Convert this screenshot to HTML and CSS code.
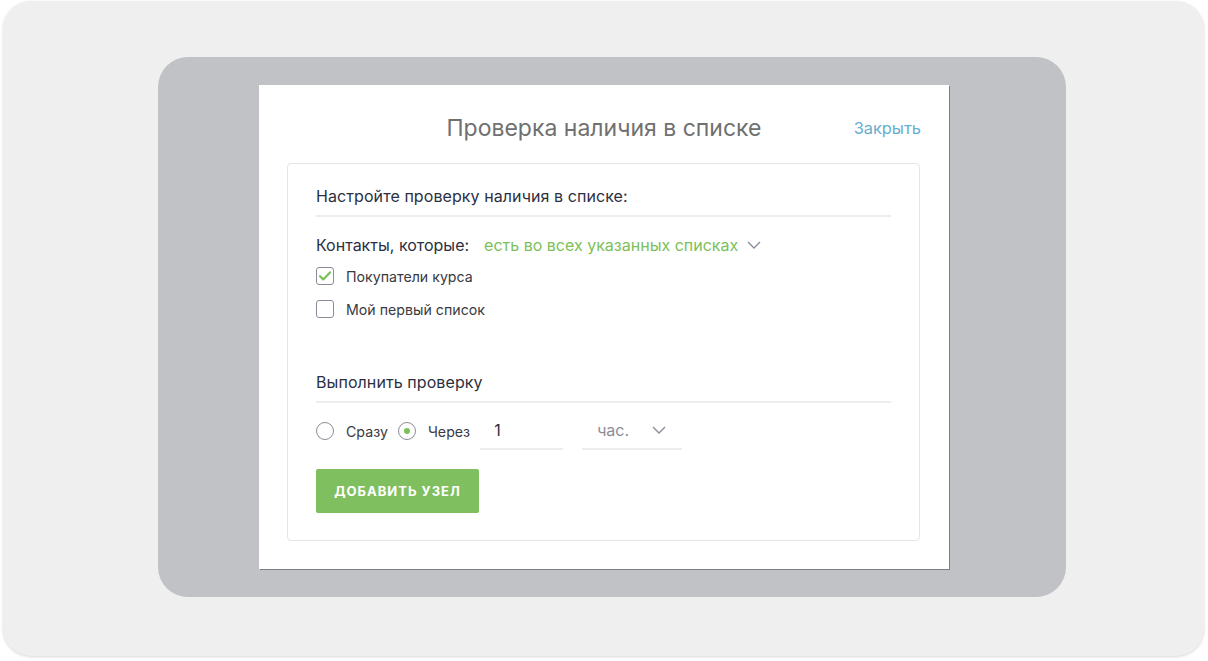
FILE: index.html
```html
<!DOCTYPE html>
<html lang="ru">
<head>
<meta charset="utf-8">
<link rel="stylesheet" href="styles.css">
</head>
<body>
<div class="frame">
  <div class="panel">
    <div class="modal">
      <div class="modal-head">
        <h1 class="modal-title">Проверка наличия в списке</h1>
        <a class="close" href="#">Закрыть</a>
      </div>
      <div class="card">
        <div class="section-title">Настройте проверку наличия в списке:</div>
        <div class="contacts-row">
          <span class="label">Контакты, которые:</span>
          <span class="dropdown">есть во всех указанных списках
            <svg class="chev" width="14" height="8" viewBox="0 0 14 8"><path d="M1 1l6 6 6-6" fill="none" stroke="#8a8d97" stroke-width="1.4"/></svg>
          </span>
        </div>
        <div class="check-row">
          <span class="checkbox checked">
            <svg width="14" height="12" viewBox="0 0 14 12"><path d="M2 6.2l3.2 3.2L12 2.4" fill="none" stroke="#7cc05a" stroke-width="2.2" stroke-linecap="round" stroke-linejoin="round"/></svg>
          </span>
          <span class="check-label">Покупатели курса</span>
        </div>
        <div class="check-row">
          <span class="checkbox"></span>
          <span class="check-label">Мой первый список</span>
        </div>
        <div class="section-title section-title--second">Выполнить проверку</div>
        <div class="radio-row">
          <span class="radio"></span>
          <span class="radio-label">Сразу</span>
          <span class="radio active"></span>
          <span class="radio-label">Через</span>
          <span class="num-input">1</span>
          <span class="unit-select">час.
            <svg class="chev" width="14" height="8" viewBox="0 0 14 8"><path d="M1 1l6 6 6-6" fill="none" stroke="#8a8d97" stroke-width="1.4"/></svg>
          </span>
        </div>
        <button class="add-btn">Добавить узел</button>
      </div>
    </div>
  </div>
</div>
</body>
</html>
```

FILE: styles.css
```css
* { box-sizing: border-box; }
html, body { margin: 0; padding: 0; background: #ffffff; }
body {
  font-family: Inter, "Noto Sans", "Liberation Sans", sans-serif;
  width: 1208px;
  height: 661px;
  overflow: hidden;
}
.frame {
  margin: 1px 0 0 3px;
  width: 1201px;
  height: 655px;
  background: #efefef;
  border-radius: 28px;
  box-shadow: 0 1px 3px rgba(0,0,0,0.16);
  padding: 56px 0 0 155px;
}
.panel {
  width: 908px;
  height: 540px;
  background: #c1c2c6;
  border-radius: 30px;
  padding: 28px 0 0 101px;
}
.modal {
  width: 690px;
  height: 484px;
  background: #ffffff;
  box-shadow: 1px 1px 0 #7c7d85;
  padding: 0 28px;
}
.modal-head {
  height: 78px;
  display: flex;
  align-items: center;
  justify-content: center;
  position: relative;
}
.modal-title {
  margin: 0;
  font-weight: 400;
  font-size: 23px;
  color: #707070;
  line-height: 30px;
  padding-top: 8px;
}
.close {
  position: absolute;
  right: 0;
  top: 32px;
  font-size: 16.4px;
  color: #67aecf;
  text-decoration: none;
  line-height: 22px;
}
.card {
  width: 633px;
  height: 378px;
  border: 1px solid #e6e6e6;
  border-radius: 4px;
  padding: 20px 28px 0 28px;
}
.section-title {
  font-size: 16px;
  letter-spacing: 0.08px;
  line-height: 24px;
  color: #2c2f42;
  padding-bottom: 7px;
  border-bottom: 2px solid #ededed;
}
.section-title--second { margin-top: 49px; }
.contacts-row {
  margin-top: 16px;
  display: flex;
  align-items: center;
  height: 24px;
  font-size: 16px;
}
.label { color: #2c2f42; }
.dropdown {
  margin-left: 15px;
  color: #7cc05a;
  display: flex;
  align-items: center;
}
.dropdown .chev { margin-left: 9px; }
.check-row {
  display: flex;
  align-items: center;
  height: 24px;
  margin-top: 7px;
}
.check-row + .check-row { margin-top: 9px; }
.checkbox {
  width: 18px;
  height: 18px;
  border: 1.5px solid #8b8c98;
  border-radius: 3px;
  display: flex;
  align-items: center;
  justify-content: center;
  flex-shrink: 0;
}
.check-label {
  margin-left: 12px;
  font-size: 14.2px;
  color: #3a3a3f;
}
.radio-row {
  display: flex;
  align-items: center;
  margin-top: 9px;
  height: 38px;
  font-size: 14.2px;
}
.radio {
  width: 18px;
  height: 18px;
  border: 1.5px solid #8b8c98;
  border-radius: 50%;
  flex-shrink: 0;
  position: relative;
}
.radio.active::after {
  content: "";
  position: absolute;
  left: 50%;
  top: 50%;
  width: 6px;
  height: 6px;
  margin: -3px 0 0 -3px;
  background: #7cc05a;
  border-radius: 50%;
}
.radio-label {
  margin-left: 12px;
  margin-right: 10px;
  color: #3a3a3f;
}
.num-input {
  width: 83px;
  height: 38px;
  line-height: 36px;
  padding-left: 14px;
  border-bottom: 2px solid #ededed;
  color: #2c2f42;
  font-size: 16px;
}
.unit-select {
  margin-left: 19px;
  width: 100px;
  height: 38px;
  padding: 0 16px 0 15px;
  border-bottom: 2px solid #ededed;
  display: flex;
  align-items: center;
  justify-content: space-between;
  color: #8a8c94;
  font-size: 16px;
}
.add-btn {
  margin-top: 19px;
  width: 163px;
  height: 44px;
  border: none;
  border-radius: 2px;
  background: #80bf5f;
  color: #ffffff;
  font-family: inherit;
  font-weight: 700;
  font-size: 13px;
  letter-spacing: 1px;
  text-transform: uppercase;
  padding: 0;
  display: block;
}
```
